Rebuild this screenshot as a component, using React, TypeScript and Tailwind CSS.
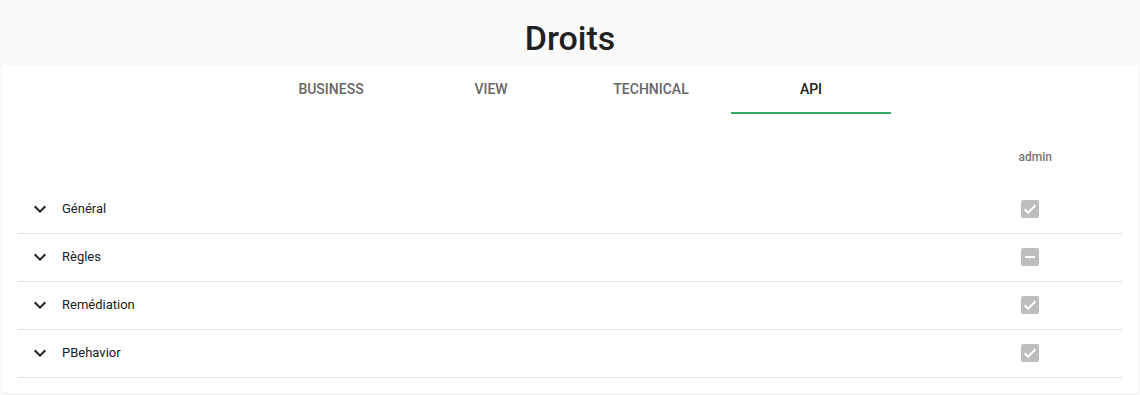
import React from "react";

const rows: { name: string; state: "checked" | "indeterminate" }[] = [
  { name: "Général", state: "checked" },
  { name: "Règles", state: "indeterminate" },
  { name: "Remédiation", state: "checked" },
  { name: "PBehavior", state: "checked" },
];

const tabs = ["BUSINESS", "VIEW", "TECHNICAL", "API"];

function Chevron() {
  return (
    <svg width="24" height="24" viewBox="0 0 24 24" className="shrink-0">
      <path d="M16.59 8.59 12 13.17 7.41 8.59 6 10l6 6 6-6z" fill="#212121" />
    </svg>
  );
}

function Box({ state }: { state: "checked" | "indeterminate" }) {
  return (
    <svg width="24" height="24" viewBox="0 0 24 24">
      <rect x="3" y="3" width="18" height="18" rx="2" fill="#bdbdbd" />
      {state === "checked" ? (
        <path d="M6.6 12.2 10 15.6 17.4 8.2" stroke="#fff" strokeWidth="2" fill="none" />
      ) : (
        <rect x="7" y="11" width="10" height="2" fill="#fff" />
      )}
    </svg>
  );
}

export default function App() {
  return (
    <div
      className="w-[1140px] h-[395px] bg-[#fafafa] flex flex-col"
      style={{ fontFamily: "Roboto, 'Liberation Sans', sans-serif" }}
    >
      <div className="h-[66px] pt-[18px] flex justify-center">
        <h1 className="text-[34px] leading-[40px] font-medium text-[#212121]">Droits</h1>
      </div>
      <div className="mx-[2px] h-[327px] bg-white shadow-[0_1px_2px_rgba(0,0,0,0.05)] flex flex-col">
        <div className="flex justify-center h-[48px] pl-[2px]">
          {tabs.map((t) => (
            <div
              key={t}
              className={
                "w-[160px] flex items-center justify-center text-[14px] font-medium " +
                (t === "API"
                  ? "text-[#212121] border-b-2 border-[#2fa866]"
                  : "text-[#666666] border-b-2 border-transparent")
              }
            >
              {t}
            </div>
          ))}
        </div>
        <div className="mx-4 flex flex-col">
          <div className="h-[72px] flex items-end justify-end pb-[21px] pr-[70px]">
            <span className="text-[12px] leading-[16px] font-medium text-[#757575]">admin</span>
          </div>
          {rows.map((r) => (
            <div
              key={r.name}
              className="h-[48px] pb-[2px] flex items-center border-b border-[#e0e0e0] pl-[10px] pr-[80px]"
            >
              <Chevron />
              <span className="ml-[10px] text-[13px] text-[#212121] flex-1">{r.name}</span>
              <Box state={r.state} />
            </div>
          ))}
        </div>
      </div>
    </div>
  );
}
